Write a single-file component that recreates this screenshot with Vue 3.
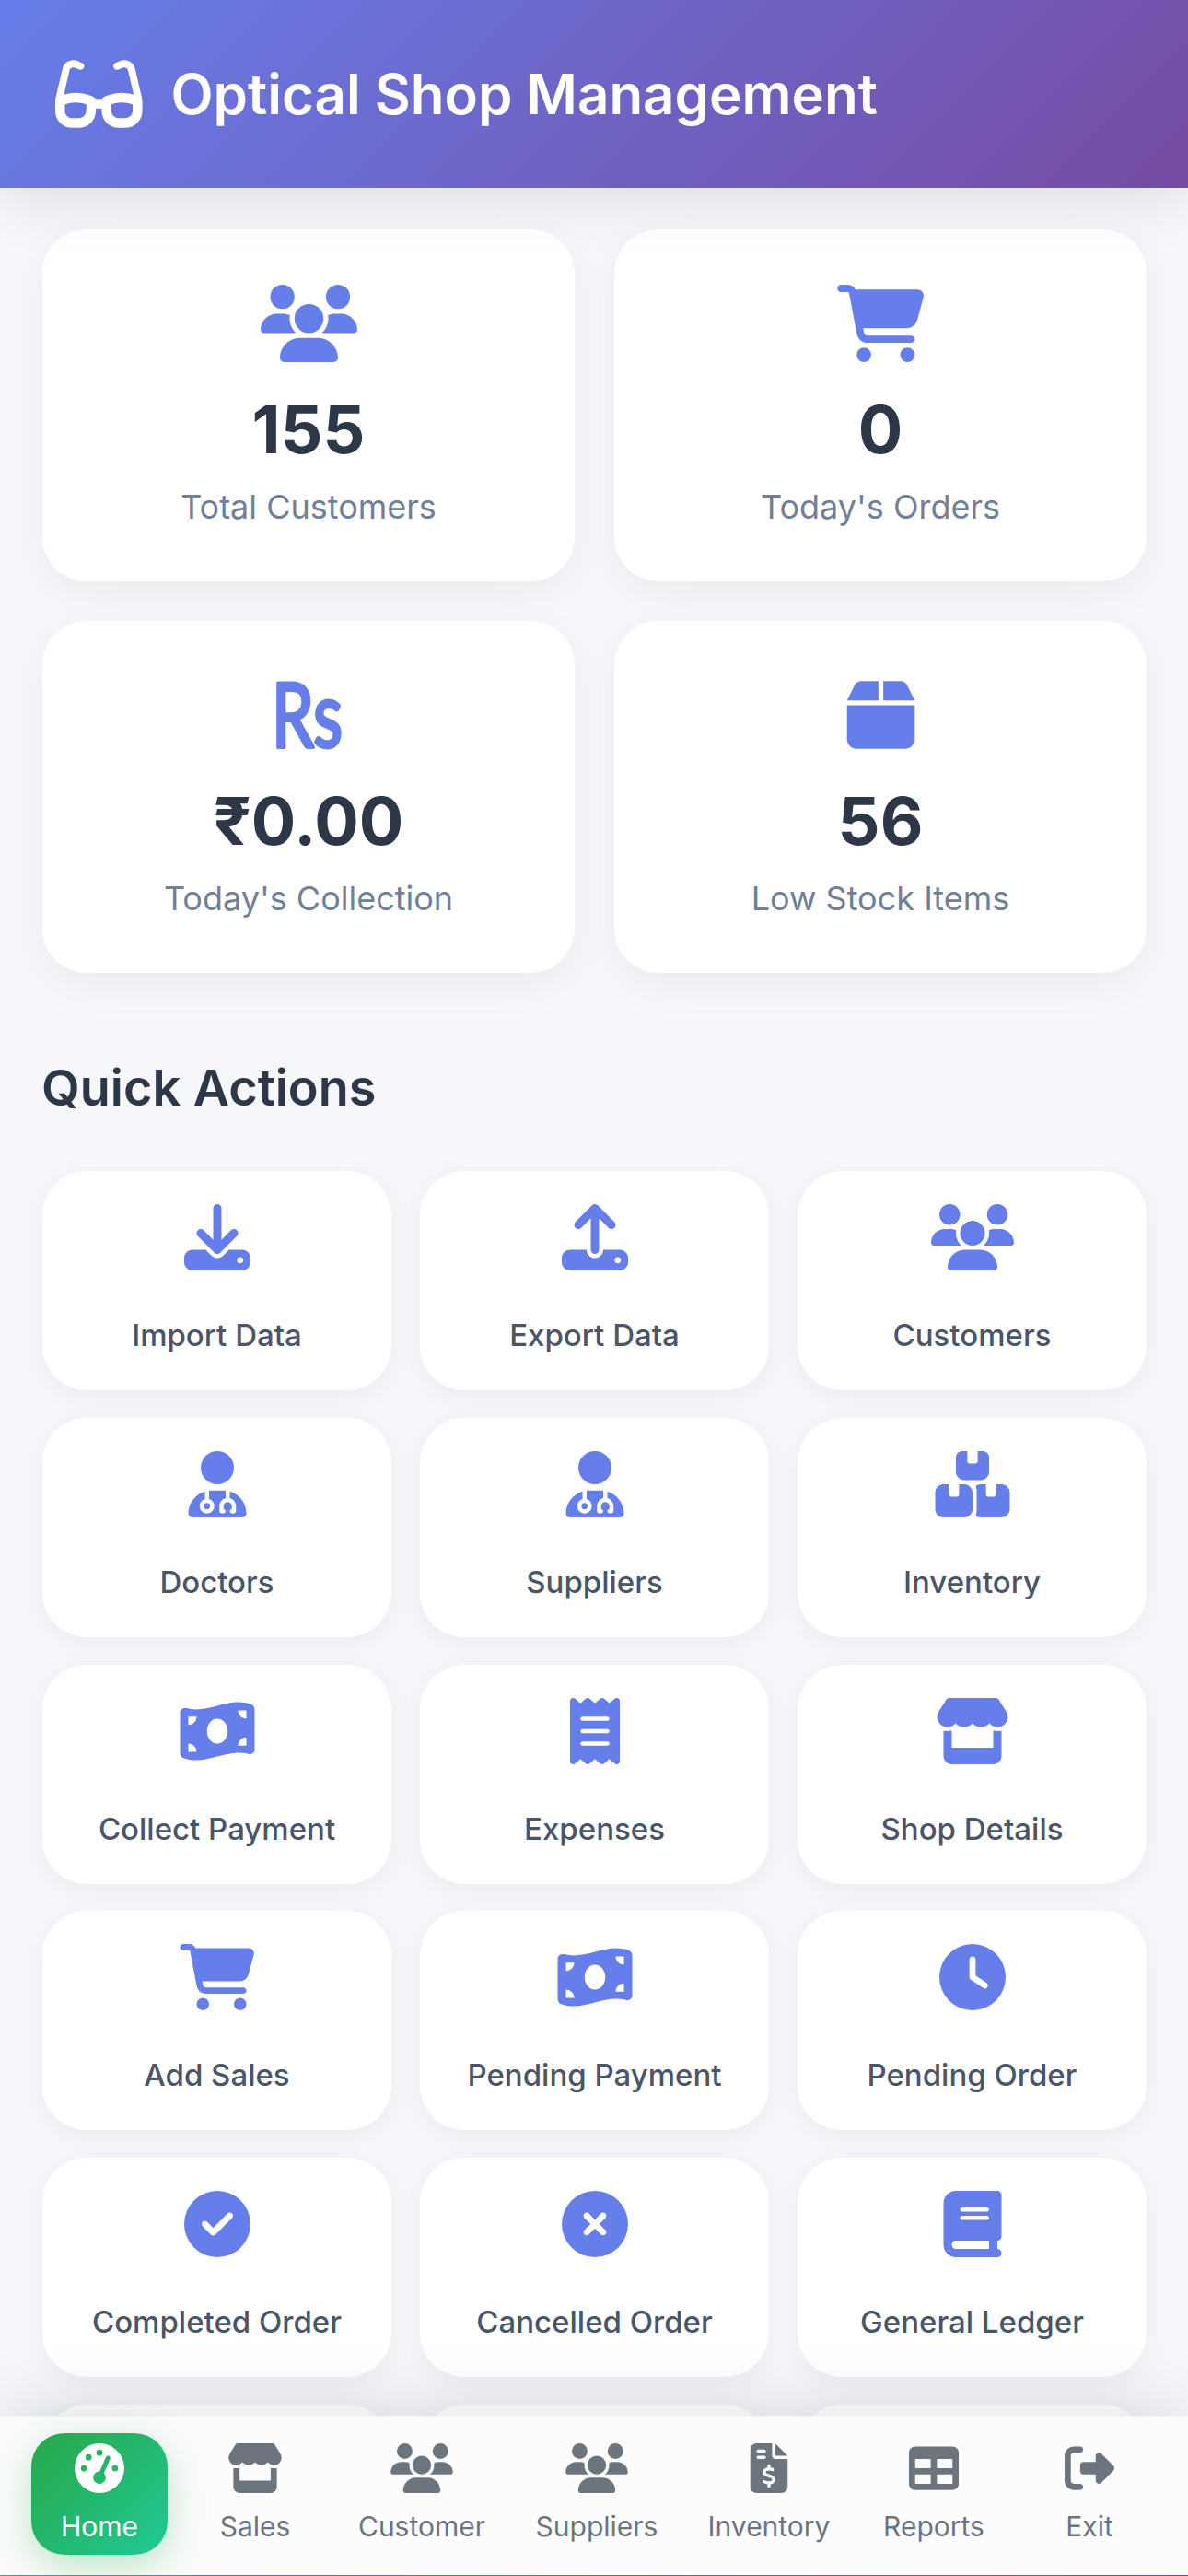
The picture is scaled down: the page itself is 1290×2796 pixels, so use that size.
<template>
  <div class="app">
    <header class="top-bar">
      <svg class="logo" viewBox="0 0 576 512"><path :d="icons.glasses" /></svg>
      <h1>Optical Shop Management</h1>
    </header>

    <main class="content">
      <section class="stats">
        <div class="stat-card" v-for="s in stats" :key="s.label">
          <svg v-if="s.rupee" class="stat-icon rupee" viewBox="0 0 140 84">
            <text x="30" y="76.5" textLength="77" lengthAdjust="spacingAndGlyphs">Rs</text>
          </svg>
          <svg v-else class="stat-icon" :viewBox="'0 0 ' + icons[s.icon + 'W'] + ' 512'"><path :d="icons[s.icon]" /></svg>
          <div class="stat-value">{{ s.value }}</div>
          <div class="stat-label">{{ s.label }}</div>
        </div>
      </section>

      <h2 class="section-title">Quick Actions</h2>

      <section class="actions">
        <div class="action-card" v-for="a in actions" :key="a.label">
          <svg class="action-icon" :viewBox="'0 0 ' + icons[a.icon + 'W'] + ' 512'"><path :d="icons[a.icon]" /></svg>
          <span>{{ a.label }}</span>
        </div>
        <!-- next row is scrolled under the nav, only the card tops show -->
        <div class="action-card" v-for="i in 3" :key="'more-' + i"></div>
      </section>
    </main>

    <nav class="bottom-nav">
      <div class="nav-item" :class="{ active: n.active }" v-for="n in navItems" :key="n.label">
        <svg class="nav-icon" :viewBox="'0 0 ' + icons[n.icon + 'W'] + ' 512'"><path :d="icons[n.icon]" /></svg>
        <span>{{ n.label }}</span>
      </div>
    </nav>
  </div>
</template>

<script setup>
// font awesome solid shapes, W = viewBox width
const icons = {
  glassesW: 576,
  glasses: 'M118.6 80c-11.5 0-21.4 7.9-24 19.1L57 260.3c20.5-6.2 48.3-12.3 78.7-12.3c32.3 0 61.8 6.9 82.8 13.5c10.6 3.3 19.3 6.7 25.4 9.2c3.1 1.3 5.5 2.4 7.3 3.2c.9 .4 1.6 .7 2.1 1l.6 .3 .2 .1 .1 0 0 0 0 0s0 0-6.3 12.7h0l6.3-12.7c5.8 2.9 10.4 7.3 13.5 12.7h40.6c3.1-5.3 7.7-9.8 13.5-12.7l6.3 12.7h0c-6.3-12.7-6.3-12.7-6.3-12.7l0 0 0 0 .1 0 .2-.1 .6-.3c.5-.2 1.2-.6 2.1-1c1.8-.8 4.2-1.9 7.3-3.2c6.1-2.6 14.8-5.9 25.4-9.2c21-6.6 50.4-13.5 82.8-13.5c30.4 0 58.2 6.1 78.7 12.3L481.4 99.1c-2.6-11.2-12.6-19.1-24-19.1c-3.1 0-6.2 .6-9.2 1.8L416.9 94.3c-12.3 4.9-26.3-1.1-31.2-13.4s1.1-26.3 13.4-31.2l31.3-12.5c8.6-3.4 17.7-5.2 27-5.2c33.8 0 63.1 23.3 70.8 56.2l43.9 188c1.7 7.3 2.9 14.7 3.5 22.1c.3 1.9 .5 3.8 .5 5.7v6.7V352v16c0 61.9-50.1 112-112 112H419.7c-59.4 0-108.5-46.4-111.8-105.8L306.6 352H269.4l-1.2 22.2C264.9 433.6 215.8 480 156.3 480H112C50.1 480 0 429.9 0 368V352 310.7 304c0-1.9 .2-3.8 .5-5.7c.6-7.4 1.8-14.8 3.5-22.1l43.9-188C55.5 55.3 84.8 32 118.6 32c9.2 0 18.4 1.8 27 5.2l31.3 12.5c12.3 4.9 18.3 18.9 13.4 31.2s-18.9 18.3-31.2 13.4L127.8 81.8c-2.9-1.2-6-1.8-9.2-1.8zM64 325.4V368c0 26.5 21.5 48 48 48h44.3c25.5 0 46.5-19.9 47.9-45.3l2.5-45.6c-2.3-.8-4.9-1.7-7.5-2.5c-17.2-5.4-39.9-10.5-63.6-10.5c-23.7 0-46.2 5.1-63.2 10.5c-3.1 1-5.9 1.9-8.5 2.9zM512 368V325.4c-2.6-.9-5.5-1.9-8.5-2.9c-17-5.4-39.5-10.5-63.2-10.5c-23.7 0-46.4 5.1-63.6 10.5c-2.7 .8-5.2 1.7-7.5 2.5l2.5 45.6c1.4 25.4 22.5 45.3 47.9 45.3H464c26.5 0 48-21.5 48-48z',
  usersW: 640,
  users: 'M144 0a80 80 0 1 1 0 160A80 80 0 1 1 144 0zM512 0a80 80 0 1 1 0 160A80 80 0 1 1 512 0zM0 298.7C0 239.8 47.8 192 106.7 192h42.7c15.9 0 31 3.5 44.6 9.7c-1.3 7.2-1.9 14.7-1.9 22.3c0 38.2 16.8 72.5 43.3 96c-.2 0-.4 0-.7 0H21.3C9.6 320 0 310.4 0 298.7zM405.3 320c-.2 0-.4 0-.7 0c26.6-23.5 43.3-57.8 43.3-96c0-7.6-.7-15-1.9-22.3c13.6-6.3 28.7-9.7 44.6-9.7h42.7C592.2 192 640 239.8 640 298.7c0 11.8-9.6 21.3-21.3 21.3H405.3zM224 224a96 96 0 1 1 192 0 96 96 0 1 1 -192 0zM128 485.3C128 411.7 187.7 352 261.3 352H378.7C452.3 352 512 411.7 512 485.3c0 14.7-11.9 26.7-26.7 26.7H154.7c-14.7 0-26.7-11.9-26.7-26.7z',
  cartW: 576,
  cart: 'M0 24C0 10.7 10.7 0 24 0H69.5c22 0 41.5 12.8 50.6 32h411c26.3 0 45.5 25 38.6 50.4l-41 152.3c-8.5 31.4-37 53.3-69.5 53.3H170.7l5.4 28.5c2.2 11.3 12.1 19.5 23.6 19.5H488c13.3 0 24 10.7 24 24s-10.7 24-24 24H199.7c-34.6 0-64.3-24.6-70.7-58.5L77.4 54.5c-.7-3.8-4-6.5-7.9-6.5H24C10.7 48 0 37.3 0 24zM128 464a48 48 0 1 1 96 0 48 48 0 1 1 -96 0zm336-48a48 48 0 1 1 0 96 48 48 0 1 1 0-96z',
  boxW: 448,
  box: 'M50.7 58.5L0 160H208V32H93.7C75.5 32 58.9 42.3 50.7 58.5zM240 160H448L397.3 58.5C389.1 42.3 372.5 32 354.3 32H240V160zm208 32H0V416c0 35.3 28.7 64 64 64H384c35.3 0 64-28.7 64-64V192z',
  downloadW: 512,
  download: 'M288 32c0-17.7-14.3-32-32-32s-32 14.3-32 32V274.7l-73.4-73.4c-12.5-12.5-32.8-12.5-45.3 0s-12.5 32.8 0 45.3l128 128c12.5 12.5 32.8 12.5 45.3 0l128-128c12.5-12.5 12.5-32.8 0-45.3s-32.8-12.5-45.3 0L288 274.7V32zM64 352c-35.3 0-64 28.7-64 64v32c0 35.3 28.7 64 64 64H448c35.3 0 64-28.7 64-64V416c0-35.3-28.7-64-64-64H346.5l-45.3 45.3c-25 25-65.5 25-90.5 0L165.5 352H64zm368 56a24 24 0 1 1 0 48 24 24 0 1 1 0-48z',
  uploadW: 512,
  upload: 'M288 109.3V352c0 17.7-14.3 32-32 32s-32-14.3-32-32V109.3l-73.4 73.4c-12.5 12.5-32.8 12.5-45.3 0s-12.5-32.8 0-45.3l128-128c12.5-12.5 32.8-12.5 45.3 0l128 128c12.5 12.5 12.5 32.8 0 45.3s-32.8 12.5-45.3 0L288 109.3zM64 352H192c0 35.3 28.7 64 64 64s64-28.7 64-64H448c35.3 0 64 28.7 64 64v32c0 35.3-28.7 64-64 64H64c-35.3 0-64-28.7-64-64V416c0-35.3 28.7-64 64-64zM432 456a24 24 0 1 0 0-48 24 24 0 1 0 0 48z',
  doctorW: 448,
  doctor: 'M224 256A128 128 0 1 0 224 0a128 128 0 1 0 0 256zm-96 55.2C54 332.9 0 401.3 0 482.3C0 498.7 13.3 512 29.7 512H418.3c16.4 0 29.7-13.3 29.7-29.7c0-81-54-149.4-128-171.1V362c27.6 7.1 48 32.2 48 62v40c0 8.8-7.2 16-16 16H336c-8.8 0-16-7.2-16-16s7.2-16 16-16V424c0-17.7-14.3-32-32-32s-32 14.3-32 32v24c8.8 0 16 7.2 16 16s-7.2 16-16 16H256c-8.8 0-16-7.2-16-16V424c0-29.8 20.4-54.9 48-62V304.9c-6-.6-12.1-.9-18.3-.9H178.3c-6.2 0-12.3 .3-18.3 .9v65.4c23.1 6.9 40 28.3 40 53.7c0 30.9-25.1 56-56 56s-56-25.1-56-56c0-25.4 16.9-46.8 40-53.7V311.2zM144 448a24 24 0 1 0 0-48 24 24 0 1 0 0 48z',
  boxesW: 576,
  boxes: 'M248 0H208c-26.5 0-48 21.5-48 48V160c0 35.3 28.7 64 64 64H352c35.3 0 64-28.7 64-64V48c0-26.5-21.5-48-48-48H328V80c0 8.8-7.2 16-16 16H264c-8.8 0-16-7.2-16-16V0zM64 256c-35.3 0-64 28.7-64 64V448c0 35.3 28.7 64 64 64H224c35.3 0 64-28.7 64-64V320c0-35.3-28.7-64-64-64H184v80c0 8.8-7.2 16-16 16H120c-8.8 0-16-7.2-16-16V256H64zM352 512H512c35.3 0 64-28.7 64-64V320c0-35.3-28.7-64-64-64H472v80c0 8.8-7.2 16-16 16H408c-8.8 0-16-7.2-16-16V256H352c-15 0-28.8 5.1-39.7 13.8c4.9 10.4 7.7 22 7.7 34.2V464c0 12.2-2.8 23.8-7.7 34.2C323.2 506.9 337 512 352 512z',
  moneyW: 576,
  money: 'M0 112.5V422.3c0 18 10.1 35 27 41.3c87 32.5 174 10.3 261-11.9c79.8-20.3 159.6-40.7 239.3-18.9c23 6.3 48.7-9.5 48.7-33.4V89.7c0-18-10.1-35-27-41.3C462 15.9 375 38.1 288 60.3C208.2 80.6 128.4 100.9 48.7 79.1C25.6 72.8 0 88.6 0 112.5zM288 352c-44.2 0-80-43-80-96s35.8-96 80-96s80 43 80 96s-35.8 96-80 96zM64 352c35.3 0 64 28.7 64 64H64V352zm64-208c0 35.3-28.7 64-64 64V144h64zM512 304v64H448c0-35.3 28.7-64 64-64zM448 96h64v64c-35.3 0-64-28.7-64-64z',
  receiptW: 384,
  receipt: 'M14 2.2C22.5-1.7 32.5-.3 39.6 5.8L80 40.4 120.4 5.8c9-7.7 22.3-7.7 31.2 0L192 40.4 232.4 5.8c9-7.7 22.2-7.7 31.2 0L304 40.4 344.4 5.8c7.1-6.1 17.1-7.5 25.6-3.6s14 12.4 14 21.8V488c0 9.4-5.5 17.9-14 21.8s-18.5 2.5-25.6-3.6L304 471.6l-40.4 34.6c-9 7.7-22.3 7.7-31.2 0L192 471.6l-40.4 34.6c-9 7.7-22.3 7.7-31.2 0L80 471.6 39.6 506.2c-7.1 6.1-17.1 7.5-25.6 3.6S0 497.4 0 488V24C0 14.6 5.5 6.1 14 2.2zM96 144c-8.8 0-16 7.2-16 16s7.2 16 16 16H288c8.8 0 16-7.2 16-16s-7.2-16-16-16H96zM80 352c0 8.8 7.2 16 16 16H288c8.8 0 16-7.2 16-16s-7.2-16-16-16H96c-8.8 0-16 7.2-16 16zM96 240c-8.8 0-16 7.2-16 16s7.2 16 16 16H288c8.8 0 16-7.2 16-16s-7.2-16-16-16H96z',
  storeW: 576,
  store: 'M547.6 103.8L490.3 13.1C485.2 5 476.1 0 466.4 0H109.6C99.9 0 90.8 5 85.7 13.1L28.3 103.8c-29.6 46.8-3.4 111.9 51.9 119.4c4 .5 8.1 .8 12.1 .8c26.1 0 49.3-11.4 65.2-29c15.9 17.6 39.1 29 65.2 29c26.1 0 49.3-11.4 65.2-29c15.9 17.6 39.1 29 65.2 29c26.2 0 49.3-11.4 65.2-29c16 17.6 39.1 29 65.2 29c4.1 0 8.1-.3 12.1-.8c55.5-7.4 81.8-72.5 52.1-119.4zM499.7 254.9l-.1 0c-5.3 .7-10.7 1.1-16.2 1.1c-12.4 0-24.3-1.9-35.4-5.3V384H128V250.6c-11.2 3.5-23.2 5.4-35.6 5.4c-5.5 0-11-.4-16.3-1.1l-.1 0c-4.1-.6-8.1-1.3-12-2.3V384v64c0 35.3 28.7 64 64 64H448c35.3 0 64-28.7 64-64V384 252.6c-4 1-8 1.8-12.3 2.3z',
  clockW: 512,
  clock: 'M256 0a256 256 0 1 1 0 512A256 256 0 1 1 256 0zM232 120V256c0 8 4 15.5 10.7 20l96 64c11 7.4 25.9 4.4 33.3-6.7s4.4-25.9-6.7-33.3L280 243.2V120c0-13.3-10.7-24-24-24s-24 10.7-24 24z',
  checkW: 512,
  check: 'M256 512A256 256 0 1 0 256 0a256 256 0 1 0 0 512zM369 209L241 337c-9.4 9.4-24.6 9.4-33.9 0l-64-64c-9.4-9.4-9.4-24.6 0-33.9s24.6-9.4 33.9 0l47 47L335 175c9.4-9.4 24.6-9.4 33.9 0s9.4 24.6 0 33.9z',
  xmarkW: 512,
  xmark: 'M256 512A256 256 0 1 0 256 0a256 256 0 1 0 0 512zM175 175c9.4-9.4 24.6-9.4 33.9 0l47 47 47-47c9.4-9.4 24.6-9.4 33.9 0s9.4 24.6 0 33.9l-47 47 47 47c9.4 9.4 9.4 24.6 0 33.9s-24.6 9.4-33.9 0l-47-47-47 47c-9.4 9.4-24.6 9.4-33.9 0s-9.4-24.6 0-33.9l47-47-47-47c-9.4-9.4-9.4-24.6 0-33.9z',
  bookW: 448,
  book: 'M96 0C43 0 0 43 0 96V416c0 53 43 96 96 96H384h32c17.7 0 32-14.3 32-32s-14.3-32-32-32V384c17.7 0 32-14.3 32-32V32c0-17.7-14.3-32-32-32H384 96zm0 384H352v64H96c-17.7 0-32-14.3-32-32s14.3-32 32-32zm32-240c0-8.8 7.2-16 16-16H336c8.8 0 16 7.2 16 16s-7.2 16-16 16H144c-8.8 0-16-7.2-16-16zm16 48H336c8.8 0 16 7.2 16 16s-7.2 16-16 16H144c-8.8 0-16-7.2-16-16s7.2-16 16-16z',
  gaugeW: 512,
  gauge: 'M0 256a256 256 0 1 1 512 0A256 256 0 1 1 0 256zM288 96a32 32 0 1 0 -64 0 32 32 0 1 0 64 0zM256 416c35.3 0 64-28.7 64-64c0-17.4-6.9-33.1-18.1-44.6L366 161.7c5.3-12.1-.2-26.3-12.3-31.6s-26.3 .2-31.6 12.3L257.9 288c-.6 0-1.3 0-1.9 0c-35.3 0-64 28.7-64 64s28.7 64 64 64zM176 144a32 32 0 1 0 -64 0 32 32 0 1 0 64 0zM96 288a32 32 0 1 0 0-64 32 32 0 1 0 0 64zm352-32a32 32 0 1 0 -64 0 32 32 0 1 0 64 0z',
  invoiceW: 384,
  invoice: 'M64 0C28.7 0 0 28.7 0 64V448c0 35.3 28.7 64 64 64H320c35.3 0 64-28.7 64-64V160H256c-17.7 0-32-14.3-32-32V0H64zM256 0V128H384L256 0zM64 80c0-8.8 7.2-16 16-16h64c8.8 0 16 7.2 16 16s-7.2 16-16 16H80c-8.8 0-16-7.2-16-16zm0 64c0-8.8 7.2-16 16-16h64c8.8 0 16 7.2 16 16s-7.2 16-16 16H80c-8.8 0-16-7.2-16-16zm128 72c8.8 0 16 7.2 16 16v17.3c8.5 1.2 16.7 3.1 24.1 5.1c8.5 2.3 13.6 11 11.3 19.6s-11 13.6-19.6 11.3c-11.1-3-22-5.2-32.1-5.3c-8.4-.1-17.4 1.8-23.6 5.5c-5.7 3.4-8.1 7.3-8.1 12.8c0 3.7 1.3 6.5 7.3 10.1c6.9 4.1 16.6 7.1 29.2 10.9l.5 .1 0 0 0 0c11.3 3.4 25.3 7.6 36.3 14.6c12.1 7.6 22.4 19.7 22.7 38.2c.3 19.3-9.6 33.3-22.9 41.6c-7.7 4.8-16.4 7.6-25.1 9.1V440c0 8.8-7.2 16-16 16s-16-7.2-16-16V422.2c-11.2-2.1-21.7-5.7-30.9-8.9l0 0c-2.1-.7-4.2-1.4-6.2-2.1c-8.4-2.8-12.9-11.9-10.1-20.2s11.9-12.9 20.2-10.1c2.5 .8 4.8 1.6 7.1 2.4l0 0 0 0 0 0c13.6 4.6 24.6 8.4 36.3 8.7c9.1 .3 17.9-1.7 23.7-5.3c5.1-3.2 7.9-7.3 7.8-14c-.1-4.6-1.8-7.8-7.7-11.6c-6.8-4.3-16.5-7.4-29-11.2l-1.6-.5 0 0c-11-3.3-24.3-7.3-34.8-13.7c-12-7.2-22.6-18.9-22.7-37.3c-.1-19.4 10.8-32.8 23.8-40.5c7.5-4.4 15.8-7.2 24.1-8.7V232c0-8.8 7.2-16 16-16z',
  tableW: 512,
  table: 'M64 256V160H224v96H64zm0 64H224v96H64V320zm224 96V320H448v96H288zM448 256H288V160H448v96zM64 32C28.7 32 0 60.7 0 96V416c0 35.3 28.7 64 64 64H448c35.3 0 64-28.7 64-64V96c0-35.3-28.7-64-64-64H64z',
  exitW: 512,
  exit: 'M377.9 105.9L500.7 228.7c7.2 7.2 11.3 17.1 11.3 27.3s-4.1 20.1-11.3 27.3L377.9 406.1c-6.4 6.4-15 9.9-24 9.9c-18.7 0-33.9-15.2-33.9-33.9l0-62.1-128 0c-17.7 0-32-14.3-32-32l0-64c0-17.7 14.3-32 32-32l128 0 0-62.1c0-18.7 15.2-33.9 33.9-33.9c9 0 17.6 3.6 24 9.9zM160 96L96 96c-17.7 0-32 14.3-32 32l0 256c0 17.7 14.3 32 32 32l64 0c17.7 0 32 14.3 32 32s-14.3 32-32 32l-64 0c-53 0-96-43-96-96L0 128C0 75 43 32 96 32l64 0c17.7 0 32 14.3 32 32s-14.3 32-32 32z',
}

const stats = [
  { icon: 'users', value: '155', label: 'Total Customers' },
  { icon: 'cart', value: '0', label: "Today's Orders" },
  { rupee: true, value: '₹0.00', label: "Today's Collection" },
  { icon: 'box', value: '56', label: 'Low Stock Items' },
]

const actions = [
  { icon: 'download', label: 'Import Data' },
  { icon: 'upload', label: 'Export Data' },
  { icon: 'users', label: 'Customers' },
  { icon: 'doctor', label: 'Doctors' },
  { icon: 'doctor', label: 'Suppliers' },
  { icon: 'boxes', label: 'Inventory' },
  { icon: 'money', label: 'Collect Payment' },
  { icon: 'receipt', label: 'Expenses' },
  { icon: 'store', label: 'Shop Details' },
  { icon: 'cart', label: 'Add Sales' },
  { icon: 'money', label: 'Pending Payment' },
  { icon: 'clock', label: 'Pending Order' },
  { icon: 'check', label: 'Completed Order' },
  { icon: 'xmark', label: 'Cancelled Order' },
  { icon: 'book', label: 'General Ledger' },
]

const navItems = [
  { icon: 'gauge', label: 'Home', active: true },
  { icon: 'store', label: 'Sales' },
  { icon: 'users', label: 'Customer' },
  { icon: 'users', label: 'Suppliers' },
  { icon: 'invoice', label: 'Inventory' },
  { icon: 'table', label: 'Reports' },
  { icon: 'exit', label: 'Exit' },
]
</script>

<style>
html, body {
  margin: 0;
  background: #f5f7fa;
}
</style>

<style scoped>
.app {
  position: relative;
  height: 2796px;
  overflow: hidden;
  background: #f5f7fa;
  font-family: Inter, "Liberation Sans", sans-serif;
}

/* 1px of the page gradient shows under the nav */
.app::after {
  content: "";
  position: absolute;
  left: 0;
  right: 0;
  bottom: 0;
  height: 1px;
  background: linear-gradient(90deg, #667eea, #764ba2);
}

.top-bar {
  position: relative;
  z-index: 2;
  height: 204px;
  box-sizing: border-box;
  padding: 0 60px;
  display: flex;
  align-items: center;
  gap: 31px;
  background: linear-gradient(135deg, #667eea 0%, #764ba2 100%);
  box-shadow: 0 12px 60px rgba(0, 0, 0, 0.1);
  color: #fff;
}

.logo {
  width: 94.5px;
  height: 84px;
  fill: #fff;
  flex-shrink: 0;
}

.top-bar h1 {
  margin: 0;
  font-size: 60px;
  font-weight: 600;
}

.content {
  padding: 45px 45px 0 46px;
}

.stats {
  display: grid;
  grid-template-columns: 1fr 1fr;
  gap: 43px;
}

.stat-card {
  height: 382px;
  box-sizing: border-box;
  padding-top: 60px;
  background: #fff;
  border-radius: 48px;
  box-shadow: 0 12px 45px rgba(0, 0, 0, 0.05);
  text-align: center;
}

.stat-icon {
  display: block;
  height: 84px;
  width: 105px;
  margin: 0 auto;
  fill: #667eea;
}

.stat-icon.rupee {
  width: 140px;
  overflow: visible;
}

.rupee text {
  font-family: Lato, sans-serif;
  font-size: 97px;
  fill: #667eea;
  stroke: #667eea;
  stroke-width: 4px;
  stroke-linejoin: round;
  stroke-linecap: round;
}

.stat-value {
  margin-top: 29px;
  font-size: 72px;
  line-height: 87px;
  font-weight: 700;
  color: #2d3748;
}

.stat-label {
  margin-top: 19px;
  font-size: 36px;
  line-height: 44px;
  color: #718096;
}

.section-title {
  margin: 92px 0 57px -1px;
  font-size: 54px;
  line-height: 66px;
  font-weight: 600;
  color: #2d3748;
}

.actions {
  display: grid;
  grid-template-columns: repeat(3, 1fr);
  gap: 29.8px 31px;
}

.action-card {
  height: 238px;
  box-sizing: border-box;
  padding-top: 36px;
  background: #fff;
  border-radius: 48px;
  box-shadow: 0 6px 30px rgba(0, 0, 0, 0.05);
  text-align: center;
  font-size: 33px;
  font-weight: 500;
  color: #4a5568;
}

.action-icon {
  display: block;
  height: 72px;
  width: 90px;
  margin: 0 auto 50px;
  fill: #667eea;
}

.bottom-nav {
  position: absolute;
  left: 0;
  right: 0;
  bottom: 1px;
  z-index: 3;
  height: 173px;
  box-sizing: border-box;
  padding: 18px 34px 0;
  display: grid;
  grid-template-columns: 148px 190px 172px 208px 166px 192px 146px;
  align-items: start;
  background: rgba(252, 252, 253, 0.98);
  box-shadow: 0 -12px 75px rgba(0, 0, 0, 0.1);
  border-top: 1px solid rgba(0, 0, 0, 0.03);
}

.nav-item {
  height: 132px;
  box-sizing: border-box;
  padding-top: 11px;
  display: flex;
  flex-direction: column;
  align-items: center;
  border-radius: 36px;
  font-size: 30px;
  color: #6c757d;
}

.nav-item.active {
  background: linear-gradient(135deg, #28a745, #20c997);
  box-shadow: 0 12px 45px rgba(40, 167, 69, 0.3);
  color: #fff;
}

.nav-icon {
  width: 68px;
  height: 54px;
  margin-bottom: 18px;
  fill: currentColor;
}
</style>
